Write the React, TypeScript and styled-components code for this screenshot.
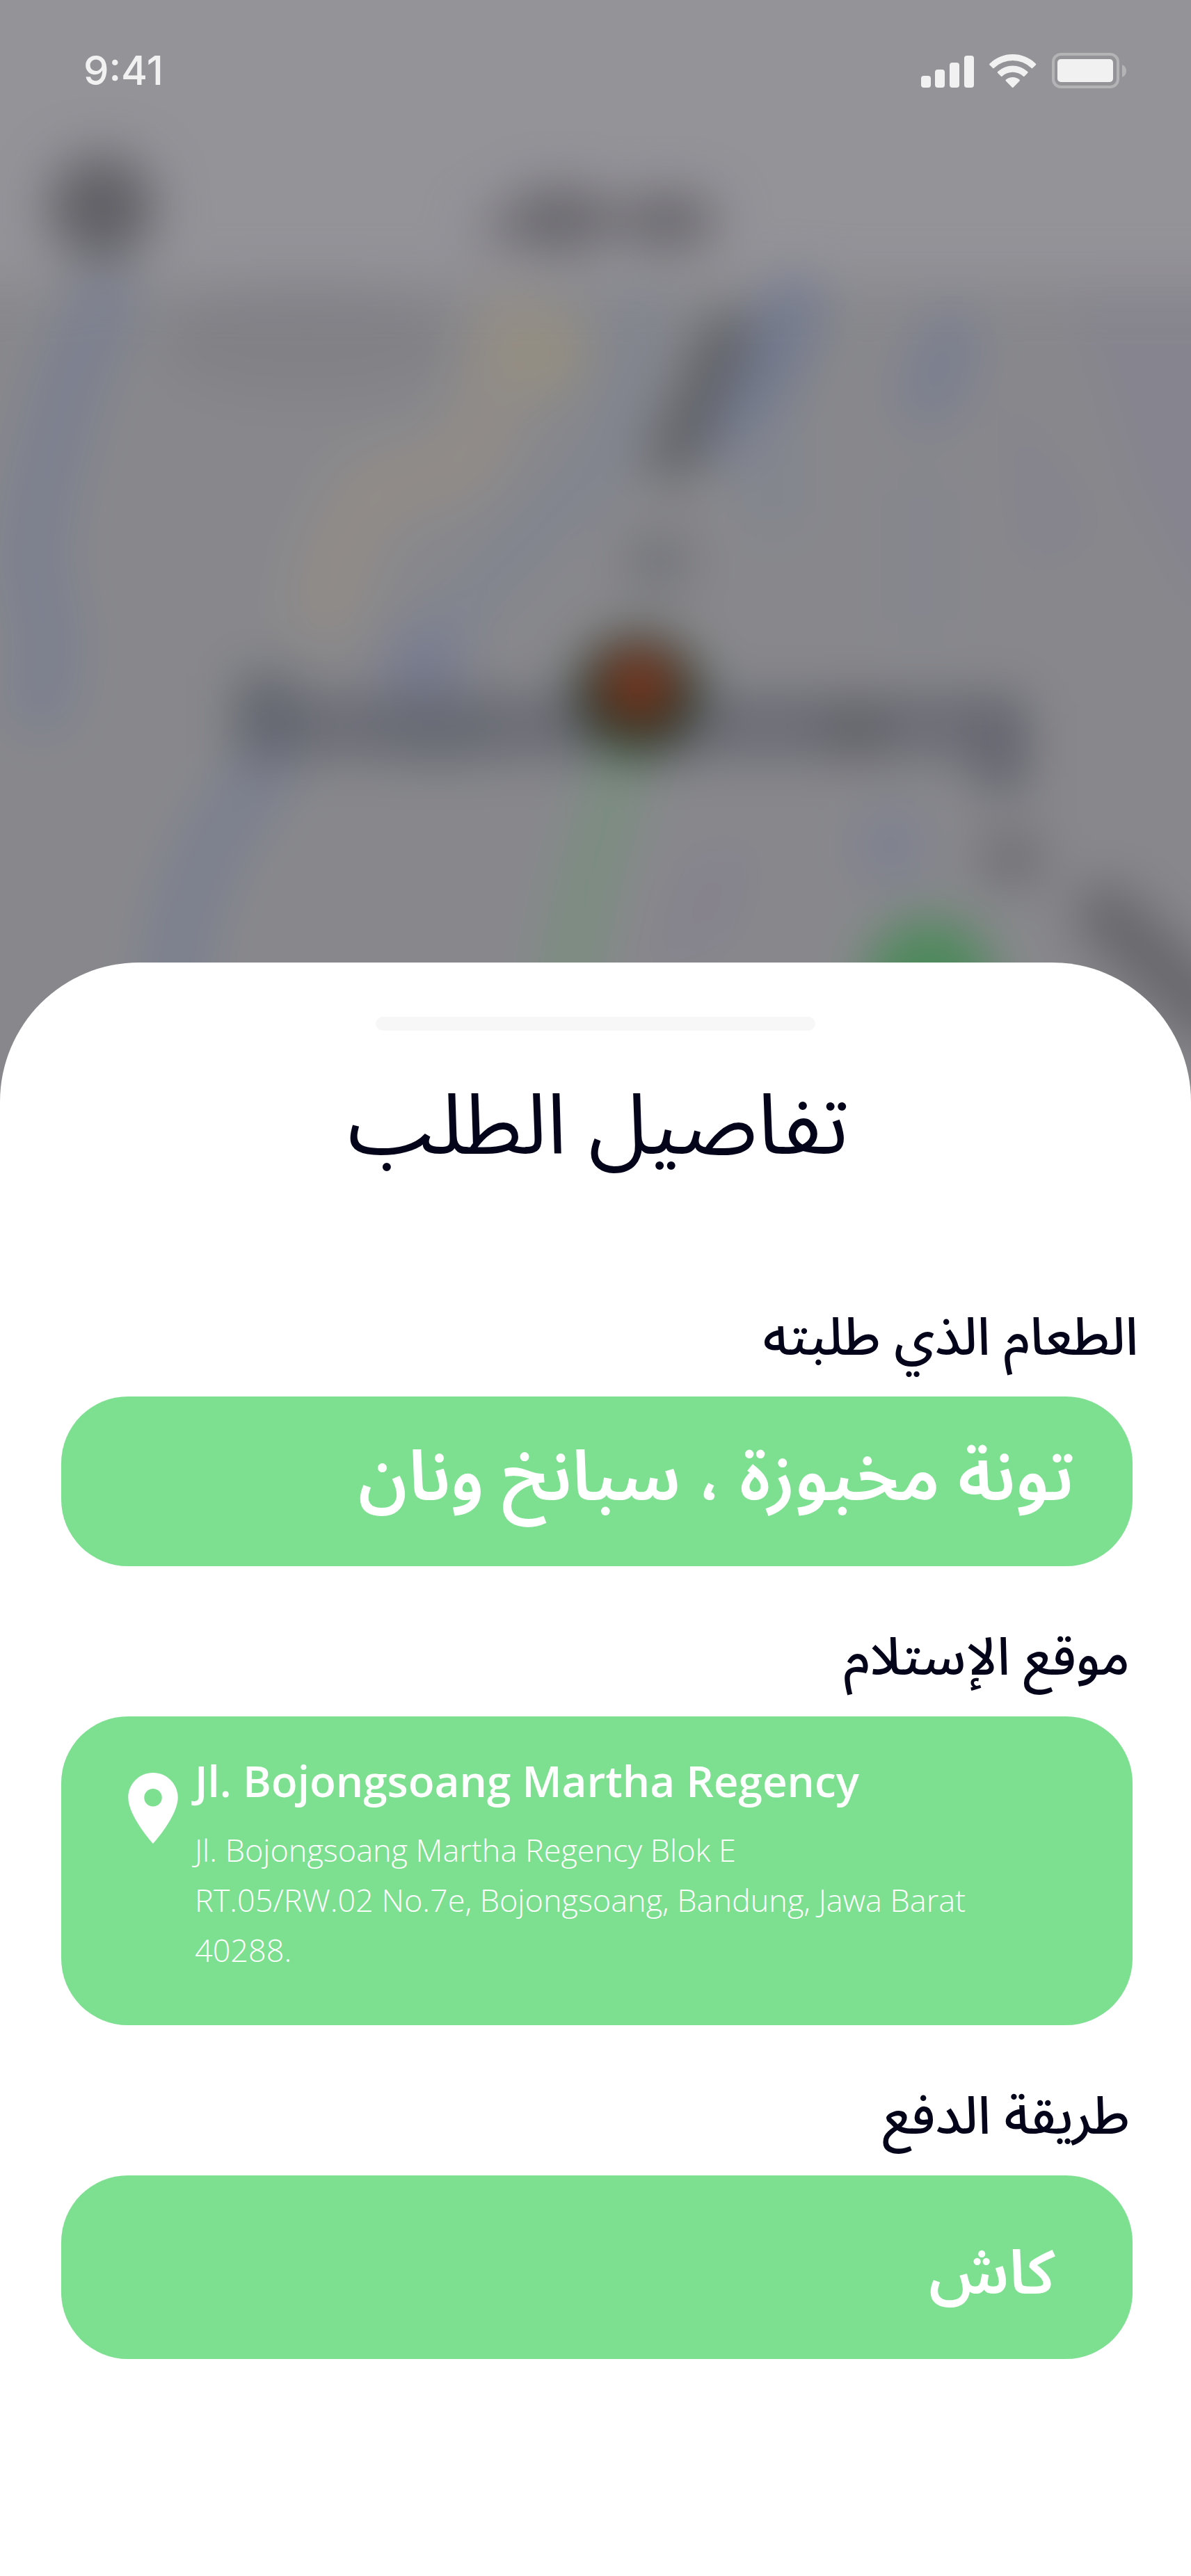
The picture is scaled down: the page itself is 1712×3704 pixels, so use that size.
import React from "react";
import styled, { createGlobalStyle } from "styled-components";

const ARABIC = '"Noto Sans Arabic", "Noto Sans", "DejaVu Sans", sans-serif';
const LATIN = '"Open Sans", "Noto Sans", sans-serif';
const CLOCK = 'Inter, "Liberation Sans", sans-serif';

const INK = "#04041a";
const GREEN = "#7ce090";
const LIGHT = "#f1f1f1";

const GlobalStyle = createGlobalStyle`
  *, *::before, *::after { box-sizing: border-box; }
  body { margin: 0; background: #ffffff; }
  h1, h2, h3, p { margin: 0; font-weight: 400; }
`;

const Screen = styled.div`
  position: relative;
  display: flex;
  flex-direction: column;
  min-height: 100vh;
  overflow: hidden;
  background: #ffffff;
`;

const Backdrop = styled.svg`
  position: absolute;
  inset: 0 0 auto;
  width: 100%;
  height: 1600px;
`;

const Hero = styled.header`
  position: relative;
  min-height: 1384px;
`;

const StatusBar = styled.div`
  display: flex;
  align-items: center;
  justify-content: space-between;
  padding: 61px 92px 0 120px;
`;

const Clock = styled.time`
  font-family: ${CLOCK};
  font-size: 58px;
  font-weight: 500;
  line-height: 80px;
  color: ${LIGHT};
`;

const StatusIcons = styled.div`
  display: flex;
  align-items: flex-end;
  gap: 21px;
`;

const StatusIcon = styled.svg`
  display: block;
`;

const Sheet = styled.main`
  position: relative;
  flex: 1;
  padding: 78px 76px 200px;
  border-radius: 200px 200px 0 0;
  background: #ffffff;
`;

const Handle = styled.div`
  width: 632px;
  max-width: 50%;
  height: 20px;
  margin: 0 auto;
  border-radius: 10px;
  background: #f7f7f7;
`;

const Title = styled.h1`
  margin-top: 58px;
  padding-left: 8px;
  font-family: ${ARABIC};
  font-size: 121px;
  line-height: 160px;
  text-align: center;
  color: ${INK};
`;

const Sections = styled.div`
  display: flex;
  flex-direction: column;
  gap: 82px;
  margin-top: 174px;
  padding-left: 12px;
`;

const Section = styled.section`
  display: flex;
  flex-direction: column;
  gap: 34px;
`;

const Label = styled.h2<{ $inset?: boolean }>`
  padding-right: ${(p) => (p.$inset ? 12 : 0)}px;
  font-family: ${ARABIC};
  font-size: 75px;
  font-weight: 500;
  line-height: 100px;
  color: ${INK};
`;

const Card = styled.div`
  margin-right: 8px;
  border-radius: 96px;
  background: ${GREEN};
  color: #ffffff;
`;

const FoodCard = styled(Card)`
  padding: 56px 84px 64px;
  font-family: ${ARABIC};
  font-size: 100px;
  font-weight: 600;
  line-height: 124px;
`;

const PaymentCard = styled(Card)`
  padding: 80px 112px 60px;
  font-family: ${ARABIC};
  font-size: 88px;
  font-weight: 600;
  line-height: 124px;
`;

const AddressCard = styled(Card)`
  display: flex;
  align-items: flex-start;
  gap: 24px;
  padding: 52px 200px 72px 96px;
  font-family: ${LATIN};
`;

const Pin = styled.svg`
  flex: none;
  width: 72px;
  height: 102px;
  margin-top: 29px;
`;

const Address = styled.address`
  display: flex;
  flex-direction: column;
  gap: 24px;
  font-style: normal;
`;

const Place = styled.h3`
  font-size: 62px;
  font-weight: 600;
  line-height: 80px;
`;

const Street = styled.p`
  font-size: 45px;
  font-weight: 300;
  line-height: 72px;
`;

function MapBackdrop() {
  return (
    <Backdrop viewBox="0 0 1712 1600" preserveAspectRatio="xMidYMin slice" aria-hidden="true">
      <defs>
        <filter
          id="soft"
          x="-120"
          y="-120"
          width="1952"
          height="1840"
          filterUnits="userSpaceOnUse"
          colorInterpolationFilters="sRGB"
        >
          <feGaussianBlur stdDeviation="36" />
        </filter>
      </defs>
      <rect width="1712" height="1600" fill="#949398" />
      <g filter="url(#soft)" fill="none" strokeLinecap="round" strokeLinejoin="round">
        <rect x="-120" y="408" width="1952" height="1312" fill="#88888c" />
        {/* districts */}
        <ellipse cx="440" cy="490" rx="210" ry="80" fill="#818186" />
        <path d="M1540 430H1830V940L1700 860L1620 700Z" fill="#86848e" />
        <path d="M1440 540L1580 770L1470 830Z" fill="#85838d" />
        <path d="M990 1230L1090 1210L1050 1350L930 1410Z" fill="#85828d" />
        {/* rivers and roads */}
        <path d="M150 430L98 556L60 698L44 809L70 920L58 1010" stroke="#7c808f" strokeWidth="96" />
        <path d="M725 460L700 600L666 667L534 706L488 793L470 872" stroke="#918c87" strokeWidth="96" />
        <circle cx="780" cy="505" r="62" fill="#958f82" />
        <path d="M920 450L900 560L870 660L717 817L608 935" stroke="#82858f" strokeWidth="88" />
        <circle cx="608" cy="960" r="60" fill="#787c90" />
        <path d="M1140 440L1110 520L1050 620" stroke="#737a8f" strokeWidth="88" />
        <path d="M1110 640L1110 730" stroke="#83868f" strokeWidth="90" />
        <path d="M1365 490L1335 570" stroke="#7a7e8f" strokeWidth="90" />
        <path d="M1323 720V880" stroke="#84868e" strokeWidth="90" />
        <path d="M380 1110L310 1203L264 1315L245 1440" stroke="#7b808f" strokeWidth="88" />
        <circle cx="1280" cy="1215" r="54" fill="#7d8090" />
        {/* place names */}
        <path d="M1045 480L966 660" stroke="#5e5f63" strokeWidth="66" />
        <ellipse cx="948" cy="808" rx="48" ry="34" fill="#6d6e74" />
        <path d="M350 1044H1470" stroke="#6b6c75" strokeWidth="96" strokeLinecap="butt" />
        <path d="M380 970V1090" stroke="#60646d" strokeWidth="80" strokeLinecap="butt" />
        <ellipse cx="630" cy="1050" rx="90" ry="48" fill="#666972" />
        <circle cx="1231" cy="1052" r="42" fill="#5f5f65" />
        <path d="M1440 1010V1140" stroke="#62636d" strokeWidth="76" strokeLinecap="butt" />
        <ellipse cx="1455" cy="1235" rx="46" ry="38" fill="#6b6b6f" />
        <path d="M1590 1315L1740 1460" stroke="#66666a" strokeWidth="88" />
        {/* route with its two ends */}
        <path d="M895 1080L880 1150L846 1267L810 1440" stroke="#798e7f" strokeWidth="72" />
        <ellipse cx="917" cy="998" rx="88" ry="84" fill="#1f2d1c" />
        <circle cx="918" cy="986" r="50" fill="#863822" />
        <circle cx="1336" cy="1414" r="92" fill="#4c895a" />
        {/* screen header */}
        <circle cx="146" cy="298" r="76" fill="#606065" />
        <path d="M705 332H790" stroke="#7c7b80" strokeWidth="46" />
        <ellipse cx="805" cy="316" rx="82" ry="46" fill="#68676c" />
        <ellipse cx="960" cy="318" rx="72" ry="40" fill="#67666b" />
      </g>
    </Backdrop>
  );
}

function Status() {
  return (
    <StatusBar>
      <Clock>9:41</Clock>
      <StatusIcons>
        <StatusIcon width="76" height="49" viewBox="0 0 76 49" fill={LIGHT} role="img" aria-label="Signal">
          <rect x="0" y="31" width="14" height="17" rx="4" />
          <rect x="20" y="22" width="14" height="26" rx="4" />
          <rect x="41" y="12" width="14" height="36" rx="4" />
          <rect x="62" y="2" width="14" height="46" rx="4" />
        </StatusIcon>
        <StatusIcon width="70" height="50" viewBox="0 0 70 50" fill={LIGHT} role="img" aria-label="Wi-Fi">
          <path d="M1.600 14.400a1.400 1.400 0 0 0 0 2l4.400 4.400a1.400 1.400 0 0 0 2 0 38.400 38.400 0 0 1 53.400 0 1.400 1.400 0 0 0 2 0l4.400-4.400a1.400 1.400 0 0 0 0-2 47.500 47.500 0 0 0-66.200 0z" />
          <path d="M13.200 26a1.400 1.400 0 0 0 0 2l4.500 4.500a1.400 1.400 0 0 0 2 0 22.300 22.300 0 0 1 30 0 1.400 1.400 0 0 0 2 0l4.500-4.500a1.400 1.400 0 0 0 0-2 31.500 31.500 0 0 0-43 0z" />
          <path d="M24.900 37.600a1.400 1.400 0 0 0 0 2l8.800 8.900a1.400 1.400 0 0 0 2 0l8.800-8.900a1.400 1.400 0 0 0 0-2 14.800 14.800 0 0 0-19.600 0z" />
        </StatusIcon>
        <StatusIcon width="108" height="51" viewBox="0 0 108 51" role="img" aria-label="Battery">
          <rect x="2" y="2" width="93" height="47" rx="11" fill="none" stroke="#b4b4b7" strokeWidth="4" />
          <rect x="8" y="9" width="80" height="33" rx="5" fill={LIGHT} />
          <path d="M101 17c8 3 8 15 0 18z" fill="#b4b4b7" />
        </StatusIcon>
      </StatusIcons>
    </StatusBar>
  );
}

export default function App() {
  return (
    <Screen>
      <GlobalStyle />
      <MapBackdrop />
      <Hero>
        <Status />
      </Hero>
      <Sheet>
        <Handle />
        <Title dir="rtl" lang="ar">تفاصيل الطلب</Title>
        <Sections>
          <Section>
            <Label dir="rtl" lang="ar">الطعام الذي طلبته</Label>
            <FoodCard dir="rtl" lang="ar">تونة مخبوزة ، سبانخ ونان</FoodCard>
          </Section>
          <Section>
            <Label dir="rtl" lang="ar" $inset>موقع الإستلام</Label>
            <AddressCard>
              <Pin viewBox="5 2 14 20" fill="#ffffff" aria-hidden="true">
                <path d="M12 2C8.130 2 5 5.130 5 9c0 5.250 7 13 7 13s7-7.750 7-13c0-3.870-3.130-7-7-7zm0 9.500a2.500 2.500 0 0 1 0-5 2.500 2.500 0 0 1 0 5z" />
              </Pin>
              <Address>
                <Place>Jl. Bojongsoang Martha Regency</Place>
                <Street>
                  Jl. Bojongsoang Martha Regency Blok E<br />
                  RT.05/RW.02 No.7e, Bojongsoang, Bandung, Jawa Barat 40288.
                </Street>
              </Address>
            </AddressCard>
          </Section>
          <Section>
            <Label dir="rtl" lang="ar" $inset>طريقة الدفع</Label>
            <PaymentCard dir="rtl" lang="ar">كاش</PaymentCard>
          </Section>
        </Sections>
      </Sheet>
    </Screen>
  );
}
